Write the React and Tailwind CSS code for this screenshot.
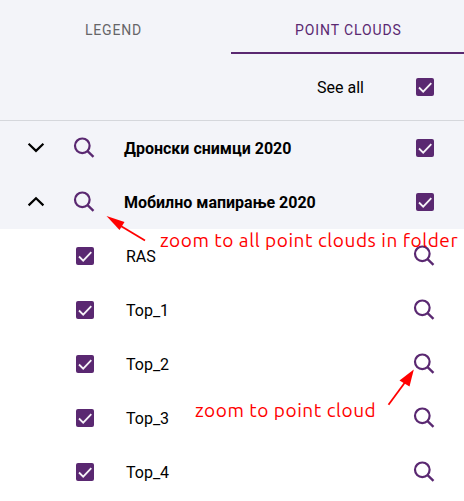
import React from "react";

const folders = [
  { name: "Дронски снимци 2020", open: false },
  { name: "Мобилно мапирање 2020", open: true },
];

const clouds = ["RAS", "Top_1", "Top_2", "Top_3", "Top_4"];

function CheckBox() {
  return (
    <span className="block h-[18px] w-[18px] shrink-0 rounded-[2px] bg-[#5a2871]">
      <svg viewBox="0 0 18 18" className="h-[18px] w-[18px]" fill="none" stroke="#f6f3f8" strokeWidth="1.8">
        <path d="M3 9.5 7.2 13.6 15.3 5.2" />
      </svg>
    </span>
  );
}

function SearchIcon() {
  return (
    <svg viewBox="0 0 22 22" className="h-[22px] w-[22px] shrink-0" fill="none" stroke="#5a2871" strokeWidth="2.2">
      <circle cx="9.3" cy="8.8" r="7.3" />
      <path d="M14.3 13.900 20.500 19.800" strokeWidth="2.4" />
    </svg>
  );
}

function Chevron({ open }) {
  return (
    <svg viewBox="0 0 18 12" className="h-3 w-[18px] shrink-0" fill="none" stroke="#000" strokeWidth="2.2">
      <path d={open ? "M1.6 9.4 9 2.3 16.4 9.4" : "M1.6 1.8 9 8.9 16.4 1.8"} />
    </svg>
  );
}

export default function App() {
  return (
    <main className="relative h-[501px] w-[464px] overflow-hidden bg-white font-['Roboto',sans-serif] text-base text-black">
      <section className="bg-[#f3f4f9]">
        <nav className="flex h-[54px] text-[14px] tracking-[0.9px]">
          <button className="w-[231px] pt-[7px] pl-[85px] text-left tracking-[0.8px] text-[#666568]">LEGEND</button>
          <button className="flex-1 border-b-2 border-[#5a2871] pt-[9px] pl-[64px] text-left text-[#5a2871]">
            POINT CLOUDS
          </button>
        </nav>
        <div className="flex h-[67px] items-center justify-end border-b border-[#d5d7dc] pr-[30px]">
          <span className="mr-[52px] pt-0.5">See all</span>
          <CheckBox />
        </div>
        {folders.map((folder) => (
          <div key={folder.name} className="flex h-[54px] items-center pr-[30px] pl-[27px]">
            <Chevron open={folder.open} />
            <span className="ml-[28px]">
              <SearchIcon />
            </span>
            <span className="ml-[29px] flex-1 pt-0.5 font-bold">{folder.name}</span>
            <CheckBox />
          </div>
        ))}
      </section>
      <ul>
        {clouds.map((name) => (
          <li key={name} className="flex h-[54px] items-center pr-[29px] pl-[76px]">
            <CheckBox />
            <span className="ml-8 flex-1 pt-0.5">{name}</span>
            <SearchIcon />
          </li>
        ))}
      </ul>

      <div className="pointer-events-none absolute inset-0 font-['Ubuntu','Noto_Sans',sans-serif] text-[19px] leading-6 font-normal tracking-[0.55px] whitespace-nowrap text-[#ff0000]">
        <svg viewBox="0 0 464 501" className="absolute inset-0 h-full w-full" fill="#ff0000" stroke="#ff0000">
          <path d="M145 240.5 120 225.500" strokeWidth="1.8" />
          <path d="M106.500 216 124.500 222 119.500 230Z" stroke="none" />
          <path d="M388.500 404.800 406 381" strokeWidth="1.8" />
          <path d="M413.800 369.500 409.500 386.500 399.500 380.500Z" stroke="none" />
        </svg>
        <span className="absolute top-[228px] left-[160px]">zoom to all point clouds in folder</span>
        <span className="absolute top-[398px] left-[195px]">zoom to point cloud</span>
      </div>
    </main>
  );
}
